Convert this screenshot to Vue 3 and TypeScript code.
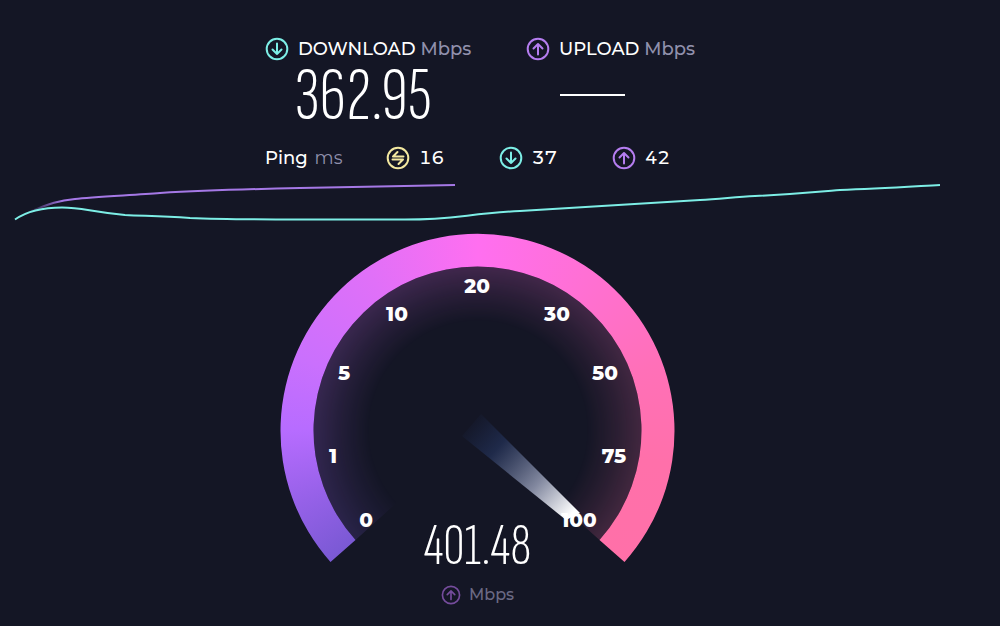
<script setup lang="ts">
interface Tick {
  label: string
  x: number
  y: number
}

interface Ping {
  kind: 'idle' | 'down' | 'up'
  name: string
  value: number
}

const icons: Record<Ping['kind'], string> = {
  idle: 'M11.5 6 7 10.500h10.500M6.500 13.500H17l-4.500 4.500',
  down: 'M12 6.500v10.500M7.500 12.500l4.500 4.500 4.500-4.500',
  up: 'M12 17.500V7M7.500 11.500 12 7l4.500 4.500',
}

const pings: Ping[] = [
  { kind: 'idle', name: 'Idle latency', value: 16 },
  { kind: 'down', name: 'Download latency', value: 37 },
  { kind: 'up', name: 'Upload latency', value: 42 },
]

const ticks: Tick[] = [
  { label: '0', x: 88, y: 289 },
  { label: '1', x: 55, y: 225 },
  { label: '5', x: 66, y: 142 },
  { label: '10', x: 119, y: 83 },
  { label: '20', x: 199, y: 55 },
  { label: '30', x: 279, y: 83 },
  { label: '50', x: 327, y: 142 },
  { label: '75', x: 336, y: 225 },
  { label: '100', x: 301, y: 289 },
]
</script>

<template>
  <main class="page">
    <header class="results">
      <section class="result">
        <h2 class="heading">
          <svg class="icon down" viewBox="0 0 24 24" aria-hidden="true">
            <circle cx="12" cy="12" r="10.300" />
            <path :d="icons.down" />
          </svg>
          <span>DOWNLOAD <span class="unit">Mbps</span></span>
        </h2>
        <p class="speed">362.95</p>
      </section>
      <section class="result">
        <h2 class="heading">
          <svg class="icon up" viewBox="0 0 24 24" aria-hidden="true">
            <circle cx="12" cy="12" r="10.300" />
            <path :d="icons.up" />
          </svg>
          <span>UPLOAD <span class="unit">Mbps</span></span>
        </h2>
        <p class="speed pending" aria-label="Upload pending"><span class="dash"></span></p>
      </section>
    </header>

    <div class="pings">
      <span class="ping-title">Ping <span class="unit ms">ms</span></span>
      <span v-for="p in pings" :key="p.kind" class="ping" :aria-label="p.name">
        <svg class="icon" :class="p.kind" viewBox="0 0 24 24" aria-hidden="true">
          <circle cx="12" cy="12" r="10.300" />
          <path :d="icons[p.kind]" />
        </svg>
        {{ p.value }}
      </span>
    </div>

    <svg class="graph" viewBox="0 0 925 44" preserveAspectRatio="none" aria-hidden="true">
      <defs>
        <linearGradient id="upline" gradientUnits="userSpaceOnUse" x1="0" y1="0" x2="60" y2="0">
          <stop offset="0.200" stop-color="#a578e6" stop-opacity="0" />
          <stop offset="0.800" stop-color="#a578e6" />
        </linearGradient>
      </defs>
      <path
        class="line"
        stroke="url(#upline)"
        d="M14 32C28 27 38 21 60 19C78 17 120 15 145 13C180 11 240 9 285 8C330 7 390 6 440 5"
      />
      <path
        class="line cyan"
        d="M0 39.500C8 34 24 27.500 47 27.500C68 27.500 75 32 110 35C130 36 145 36 175 38C210 39.500 240 39.500 285 39.500H390C440 39.500 450 34 505 31C560 28 620 24 685 20C705 19 720 17 740 16C780 14 790 13 825 10C860 9 890 7 925 5"
      />
    </svg>

    <section class="gauge" aria-label="Upload speed">
      <div class="dial">
        <div class="glow"></div>
        <div class="arc"></div>
        <svg class="face" viewBox="0 0 400 340">
          <defs>
            <linearGradient id="needle" gradientUnits="userSpaceOnUse" x1="188" y1="192" x2="296" y2="290">
              <stop offset="0" stop-color="#1c2b52" stop-opacity="0" />
              <stop offset="0.280" stop-color="#222f53" stop-opacity="0.800" />
              <stop offset="0.650" stop-color="#8389a0" />
              <stop offset="0.960" stop-color="#ffffff" />
            </linearGradient>
          </defs>
          <path d="M203 184 302 283 288 290 184 206Z" fill="url(#needle)" />
          <text v-for="t in ticks" :key="t.label" class="tick" :x="t.x" :y="t.y + 8">
            {{ t.label }}
          </text>
        </svg>
      </div>
      <div class="readout">
        <p class="current">401.48</p>
        <p class="legend">
          <svg class="icon small up" viewBox="0 0 24 24" aria-hidden="true">
            <circle cx="12" cy="12" r="10.300" />
            <path :d="icons.up" />
          </svg>
          Mbps
        </p>
      </div>
    </section>
  </main>
</template>

<style>
body {
  margin: 0;
  background: #141625;
}
</style>

<style scoped>
.page {
  box-sizing: border-box;
  min-height: 100vh;
  padding: 37px 60px 0 15px;
  background: #141625;
  color: #ffffff;
  font-family: Montserrat, Inter, "Noto Sans", sans-serif;
  overflow: hidden;
}

h2,
p {
  margin: 0;
}

.results {
  display: grid;
  grid-template-columns: 261px 1fr;
  max-width: 425px;
  margin: 0 auto;
}

.heading {
  display: flex;
  align-items: center;
  gap: 9px;
  font-size: 18px;
  line-height: 24px;
  font-weight: 500;
  white-space: nowrap;
}

.unit {
  color: #9090ac;
}

.icon {
  flex: none;
  width: 24px;
  height: 24px;
  fill: none;
  stroke-width: 2;
  stroke-linecap: round;
  stroke-linejoin: round;
}

.down {
  stroke: #7deee6;
}

.up {
  stroke: #b57df0;
}

.idle {
  stroke: #f3e8a0;
}

.small {
  width: 20px;
  height: 20px;
}

.speed,
.current {
  font-family: "Sofia Sans Extra Condensed", "Big Shoulders Display", Antonio, "Pathway Gothic One", "Saira ExtraCondensed", "Barlow Condensed", "Roboto Condensed", Roboto, sans-serif;
  font-weight: 300;
}

.speed {
  width: 196px;
  height: 68px;
  font-size: 76px;
  line-height: 72px;
  text-align: center;
}

.pending {
  display: flex;
  align-items: center;
  box-sizing: border-box;
  padding-left: 34px;
}

.dash {
  width: 65px;
  height: 2px;
  background: #ffffff;
}

.pings {
  display: grid;
  grid-template-columns: 121px 113px 113px 1fr;
  align-items: center;
  max-width: 425px;
  height: 24px;
  margin: 17px auto 0;
  font-size: 18px;
  line-height: 24px;
  font-weight: 500;
  font-variant-numeric: tabular-nums;
}

.ms {
  margin-left: 2px;
  font-weight: 400;
}

.ping {
  display: flex;
  align-items: center;
  gap: 9px;
}

.graph {
  display: block;
  width: 100%;
  height: 44px;
  margin-top: 10px;
  overflow: visible;
}

.line {
  fill: none;
  stroke-width: 2;
}

.cyan {
  stroke: #7deee6;
}

.gauge {
  display: grid;
  justify-items: center;
  margin-top: 6px;
}

.dial,
.readout {
  grid-area: 1 / 1;
}

.dial {
  display: grid;
  width: 400px;
  height: 377px;
  align-items: start;
}

.dial > * {
  grid-area: 1 / 1;
}

.arc,
.glow {
  width: 400px;
  height: 340px;
  background: conic-gradient(
    from 180deg at 200px 200px,
    #7656cf 0deg,
    #7a59d4 48deg,
    #9661e8 68deg,
    #b76cff 90deg,
    #ca70fd 112deg,
    #e070f8 145deg,
    #ff6ff0 180deg,
    #ff70d4 215deg,
    #ff70b8 250deg,
    #ff70aa 280deg,
    #ff70a6 360deg
  );
}

.arc {
  clip-path: path("M53 332A197 197 0 1 1 347 332L322 310A164 164 0 1 0 78 310Z");
}

.glow {
  opacity: 0.200;
  clip-path: path("M78 310A164 164 0 1 1 322 310L200 200Z");
  mask-image: radial-gradient(circle at 200px 200px, transparent 108px, rgba(0, 0, 0, 0.450) 136px, #000000 165px);
}

.face {
  z-index: 1;
  width: 400px;
  height: 340px;
}

.tick {
  fill: #ffffff;
  font-size: 20px;
  font-weight: 800;
  text-anchor: middle;
}

.readout {
  align-self: end;
  text-align: center;
}

.current {
  font-size: 60px;
  line-height: 62px;
}

.legend {
  display: flex;
  align-items: center;
  justify-content: center;
  gap: 8px;
  margin-top: 6px;
  font-size: 16px;
  line-height: 24px;
  font-weight: 500;
  color: #6b6a84;
}

.legend .icon {
  stroke: #754c9c;
}
</style>
